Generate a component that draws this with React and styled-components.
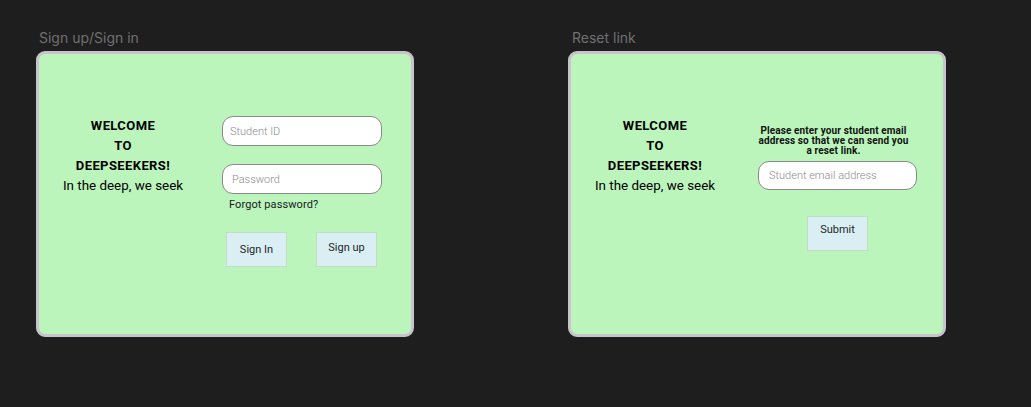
import React from "react";
import styled, { createGlobalStyle } from "styled-components";

const GlobalStyle = createGlobalStyle`
  html, body {
    margin: 0;
    padding: 0;
    background: #1e1e1e;
  }
  body {
    font-family: Roboto, "Liberation Sans", sans-serif;
  }
  * { box-sizing: border-box; }
`;

const Canvas = styled.div`
  display: flex;
  align-items: flex-start;
  gap: 154px;
  padding: 29px 0 0 36px;
  min-height: 407px;
  background: #1e1e1e;
`;

const Frame = styled.section`
  display: flex;
  flex-direction: column;
`;

const FrameLabel = styled.div`
  font-family: Inter, "Liberation Sans", sans-serif;
  font-size: 14px;
  line-height: 17px;
  color: #707070;
  padding-left: ${(p) => p.$indent}px;
  margin-bottom: 5px;
`;

const Card = styled.div`
  width: 378px;
  height: 286px;
  background: #bbf5bc;
  border: 3px solid #c8c3cc;
  border-radius: 9px;
  display: flex;
  align-items: flex-start;
  padding: 62px 0 0 14px;
`;

const Welcome = styled.div`
  width: 140px;
  flex: none;
  text-align: center;
  font-family: Roboto, "Liberation Sans", sans-serif;
  font-size: 13px;
  line-height: 20px;
  color: #000;
`;

const WelcomeLine = styled.div`
  font-weight: 700;
  letter-spacing: 0.4px;
`;

const Motto = styled.div`
  font-weight: 400;
  font-size: 13.4px;
`;

const Form = styled.div`
  display: flex;
  flex-direction: column;
  align-items: flex-start;
  margin-left: ${(p) => p.$offset}px;
`;

const Field = styled.input`
  width: ${(p) => p.$w}px;
  height: ${(p) => p.$h}px;
  border: 1px solid #8a8a8a;
  border-radius: 11px;
  background: #fff;
  padding: 0 0 0 ${(p) => p.$pad}px;
  margin-top: ${(p) => p.$mt || 0}px;
  font-family: Roboto, "Liberation Sans", sans-serif;
  font-size: 11px;
  font-weight: 300;
  color: #333;
  outline: none;
  &::placeholder {
    color: #8c8c8c;
    font-weight: 300;
  }
`;

const Forgot = styled.div`
  margin-top: 4px;
  padding-left: 7px;
  font-size: 11px;
  line-height: 13px;
  color: #1a1a1a;
  letter-spacing: 0.1px;
`;

const ButtonRow = styled.div`
  display: flex;
  gap: 29px;
  margin: 21px 0 0 4px;
`;

const Button = styled.button`
  width: 61px;
  height: 35px;
  background: #d9eff4;
  border: 1px solid #c3dcc6;
  border-radius: 0;
  display: flex;
  justify-content: center;
  align-items: flex-start;
  padding: ${(p) => p.$pt}px 0 0;
  font-family: Roboto, "Liberation Sans", sans-serif;
  font-size: 11px;
  line-height: 13px;
  color: #1f1f1f;
  cursor: pointer;
  margin: ${(p) => p.$m || "0"};
`;

const Prompt = styled.p`
  width: 153px;
  margin: 10px 0 0 -1px;
  text-align: center;
  font-size: 10px;
  line-height: 10px;
  font-weight: 700;
  color: #111;
  letter-spacing: 0.12px;
`;

function WelcomeBlock() {
  return (
    <Welcome>
      <WelcomeLine>WELCOME</WelcomeLine>
      <WelcomeLine>TO</WelcomeLine>
      <WelcomeLine>DEEPSEEKERS!</WelcomeLine>
      <Motto>In the deep, we seek</Motto>
    </Welcome>
  );
}

export default function App() {
  return (
    <>
      <GlobalStyle />
      <Canvas>
        <Frame>
          <FrameLabel $indent={3}>Sign up/Sign in</FrameLabel>
          <Card>
            <WelcomeBlock />
            <Form $offset={29}>
              <Field $w={160} $h={30} $pad={7} placeholder="Student ID" />
              <Field $w={160} $h={30} $pad={9} $mt={18} type="password" placeholder="Password" />
              <Forgot>Forgot password?</Forgot>
              <ButtonRow>
                <Button $pt={10}>Sign In</Button>
                <Button $pt={8}>Sign up</Button>
              </ButtonRow>
            </Form>
          </Card>
        </Frame>
        <Frame>
          <FrameLabel $indent={4}>Reset link</FrameLabel>
          <Card>
            <WelcomeBlock />
            <Form $offset={33}>
              <Prompt>
                Please enter your student email address so that we can send you a reset link.
              </Prompt>
              <Field $w={159} $h={29} $pad={10} $mt={5} type="email" placeholder="Student email address" />
              <Button $pt={6} $m="26px 0 0 49px">Submit</Button>
            </Form>
          </Card>
        </Frame>
      </Canvas>
    </>
  );
}
